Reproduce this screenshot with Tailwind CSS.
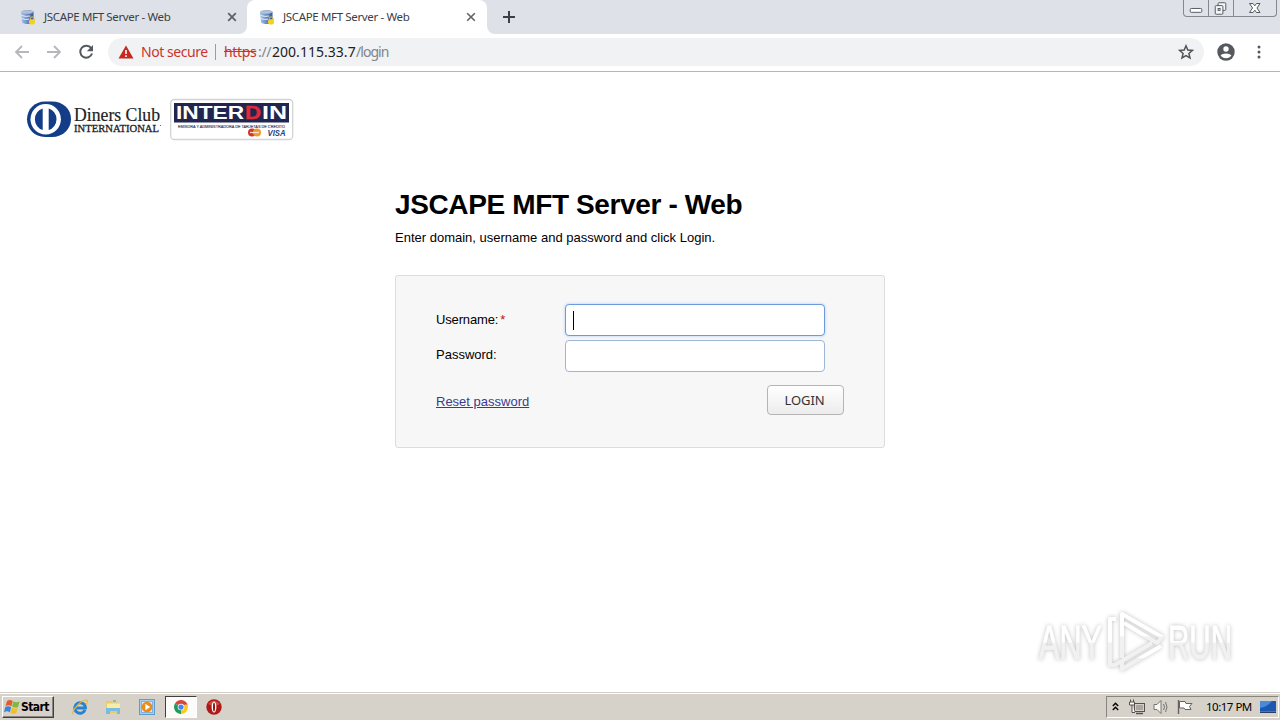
<!DOCTYPE html>
<html lang="en">
<head>
    <meta charset="UTF-8">
    <meta name="viewport" content="width=device-width, initial-scale=1.0">
    <title>JSCAPE MFT Server - Web</title>
    <script src="https://cdn.jsdelivr.net/npm/@tailwindcss/browser@4"></script>
</head>
<body class="w-[1280px] h-[720px] overflow-hidden flex flex-col bg-white text-black font-['Liberation_Sans',sans-serif]">
    <!-- server icon shared by both tabs -->
    <svg class="absolute w-0 h-0">
        <defs>
            <linearGradient id="srv" x1="0" x2="1">
                <stop offset="0" stop-color="#a5c4ee"/>
                <stop offset="1" stop-color="#31569f"/>
            </linearGradient>
            <symbol id="favicon" viewBox="0 0 16 16">
                <path d="M1 3 C1 0.5 13.5 0.5 13.5 3 V13 C13.5 15.8 2.5 15.8 2 13 Z" fill="url(#srv)"/>
                <ellipse cx="7.2" cy="3" rx="6" ry="1.8" fill="#b4c0ce"/>
                <path d="M1.5 6.5 Q6 8 10 7 M1.8 9.5 Q5 11 9 10.2" fill="none" stroke="#e3edfb"/>
                <path d="M10.2 11 V9.8 A1.9 1.9 0 0 1 14 9.8 V11" fill="none" stroke="#c9b04a" stroke-width="1.1"/>
                <rect x="9" y="10.2" width="6" height="5.3" rx="2" fill="#f2d21f"/>
            </symbol>
        </defs>
    </svg>

    <!-- tab strip -->
    <div class="h-[34px] shrink-0 bg-[#dee1e8] flex justify-between font-['Noto_Sans',sans-serif] text-[11.5px] text-[#3c4043]">
        <div class="flex">
            <div class="w-[247px] h-[34px] pl-5 pr-[10px] flex items-center">
                <svg class="size-4 mr-2"><use href="#favicon"/></svg>
                <span class="whitespace-nowrap tracking-[-0.35px]">JSCAPE MFT Server - Web</span>
                <svg class="size-[10px] ml-auto" viewBox="0 0 10 10"><path d="M1.2 1.2 L8.8 8.8 M8.8 1.2 L1.2 8.8" stroke="#5f6368" stroke-width="1.8"/></svg>
            </div>
            <div class="relative w-[240px] h-[34px] pl-3 pr-[11px] flex items-center bg-white rounded-t-lg">
                <svg class="absolute -left-2 bottom-0 size-2" viewBox="0 0 8 8"><path d="M8 0 V8 H0 A8 8 0 0 0 8 0" fill="#fff"/></svg>
                <svg class="absolute -right-2 bottom-0 size-2" viewBox="0 0 8 8"><path d="M0 0 V8 H8 A8 8 0 0 1 0 0" fill="#fff"/></svg>
                <svg class="size-4 mr-2"><use href="#favicon"/></svg>
                <span class="whitespace-nowrap tracking-[-0.35px]">JSCAPE MFT Server - Web</span>
                <svg class="size-[10px] ml-auto" viewBox="0 0 10 10"><path d="M1.2 1.2 L8.8 8.8 M8.8 1.2 L1.2 8.8" stroke="#5f6368" stroke-width="1.6"/></svg>
            </div>
            <svg class="w-3 h-[34px] ml-4" viewBox="0 0 12 34"><path d="M6 11 V23 M0 17 H12" stroke="#3c4043" stroke-width="2"/></svg>
        </div>
        <!-- window controls -->
        <div class="w-[94px] h-[17px] mr-[3px] flex border border-t-0 border-[#85888f] rounded-b-[4px] bg-[#dfe2e8]">
            <svg class="w-[25px] h-4 border-r border-[#85888f]" viewBox="0 0 25 16"><rect x="6.5" y="8.5" width="12" height="4" rx="1" fill="#fff" stroke="#54585f"/></svg>
            <svg class="w-[25px] h-4 border-r border-[#85888f]" viewBox="0 0 25 16"><g fill="#f4f5f7" stroke="#54585f"><rect x="9.5" y="2.5" width="8" height="8" rx="1"/><rect x="6.5" y="5.5" width="8" height="9" rx="1"/><rect x="9.5" y="8.5" width="2" height="2"/></g></svg>
            <svg class="w-[42px] h-4" viewBox="0 0 42 16"><path d="M15.5 3.5 H19 L20.8 5.8 L22.5 3.5 H26 L23 8 L26 12.5 H22.5 L20.8 10.2 L19 12.5 H15.5 L18.6 8 Z" fill="#fff" stroke="#54585f"/></svg>
        </div>
    </div>

    <!-- toolbar -->
    <div class="h-[38px] shrink-0 pl-[14px] pr-[14px] pb-[2px] flex items-center border-b border-[#b4b5b5] bg-white">
        <svg class="size-4 mr-4" viewBox="0 0 16 16"><path d="M15 8 H2 M8 2 L2 8 L8 14" fill="none" stroke="#b5b7ba" stroke-width="1.8"/></svg>
        <svg class="size-4 mr-4" viewBox="0 0 16 16"><path d="M1 8 H14 M8 2 L14 8 L8 14" fill="none" stroke="#b5b7ba" stroke-width="1.8"/></svg>
        <svg class="size-4 mr-[14px]" viewBox="0 0 16 16"><path d="M13.2 4.2 A6 6 0 1 0 14 9.5" fill="none" stroke="#55585c" stroke-width="2"/><path d="M15 1 V7.2 H8.8 Z" fill="#55585c"/></svg>
        <div class="w-[1096px] h-7 pl-[10px] pr-[10px] flex items-center rounded-full bg-[#f0f2f4] font-['Noto_Sans',sans-serif] text-[14px] whitespace-nowrap">
            <svg class="w-4 h-[14px] mr-[7px]" viewBox="0 0 16 14"><path d="M8 0.5 L15.5 13.5 H0.5 Z" fill="#c5281f"/><path d="M8 5 V9 M8 10.3 V12" stroke="#fff" stroke-width="1.6"/></svg>
            <span class="w-[74px] text-[#c9352c] tracking-[-0.45px]">Not secure</span>
            <span class="w-px h-4 mr-2 bg-[#9a9da1]"></span>
            <span class="w-[34px] text-[#c9352c] line-through tracking-[-0.35px]">https</span>
            <span class="w-[14px] text-[#80868b] tracking-[-0.3px]">://</span>
            <span class="w-[84px] text-[#202124] tracking-[0.03px]">200.115.33.7</span>
            <span class="text-[#80868b] tracking-[-0.95px]">/login</span>
            <svg class="size-4 ml-auto" viewBox="0 0 16 16"><path d="M8 1.8 L9.8 6 L14.4 6.4 L10.9 9.4 L12 13.9 L8 11.5 L4 13.9 L5.1 9.4 L1.6 6.4 L6.2 6 Z" fill="none" stroke="#505459" stroke-width="1.5"/></svg>
        </div>
        <svg class="size-[18px] ml-[13px] mr-[22px] shrink-0" viewBox="0 0 18 18"><circle cx="9" cy="9" r="8.7" fill="#55585d"/><circle cx="9" cy="6" r="2.7" fill="#fff"/><path d="M3.6 12.6 C5 9.8 13 9.8 14.4 12.6 C12.5 16 5.5 16 3.6 12.6" fill="#fff"/></svg>
        <svg class="w-1 h-4 shrink-0" viewBox="0 0 4 16"><g fill="#55585d"><circle cx="2" cy="3" r="1.5"/><circle cx="2" cy="8" r="1.5"/><circle cx="2" cy="13" r="1.5"/></g></svg>
    </div>

    <!-- page -->
    <main class="relative h-[620px] shrink-0 bg-white">
        <div class="h-[116px] pt-[26px] pl-[26px] flex items-start">
            <svg class="w-[136px] h-[42px] mr-2 overflow-visible" viewBox="0 0 136 42">
                <path d="M19 3.5 H26 C37 3.5 45 11 45 21 C45 31 37 39 26 39 H19 C8.5 39 1 31 1 21.3 C1 11.5 8.5 3.5 19 3.5 Z" fill="#133d87"/>
                <circle cx="19.7" cy="21.2" r="15.2" fill="#fff"/>
                <path d="M16.7 10.5 A11.3 11.3 0 0 0 16.7 32 Z M22.7 10.5 A11.3 11.3 0 0 1 22.7 32 Z" fill="#133d87"/>
                <text x="48" y="22.5" textLength="86" lengthAdjust="spacingAndGlyphs" font-family="Liberation Serif, serif" font-size="18.5" fill="#222" stroke="#222" stroke-width=".2">Diners Club</text>
                <text x="48" y="33.5" textLength="85" lengthAdjust="spacingAndGlyphs" font-family="Liberation Serif, serif" font-size="10.5" fill="#222" stroke="#222" stroke-width=".3">INTERNATIONAL</text>
                <circle cx="134.5" cy="27.5" r=".6" fill="#555"/>
            </svg>
            <svg class="w-[124px] h-[42px] overflow-visible" viewBox="0 0 124 42">
                <rect x="0.7" y="1.5" width="122" height="40" rx="3.5" fill="#fff" stroke="#d3d3d6" stroke-width="1.3"/>
                <rect x="4" y="5" width="115" height="19.5" fill="#20264f"/>
                <g font-family="Liberation Sans, sans-serif" font-weight="bold" font-size="18" fill="#fff">
                    <text x="6" y="21" textLength="68" lengthAdjust="spacingAndGlyphs">INTER</text>
                    <text x="75" y="21" textLength="16" lengthAdjust="spacingAndGlyphs" fill="#e02a38" stroke="#e02a38" stroke-width=".4">D</text>
                    <text x="92" y="21" textLength="25" lengthAdjust="spacingAndGlyphs">IN</text>
                </g>
                <text x="8" y="29.5" textLength="107" lengthAdjust="spacingAndGlyphs" font-family="Liberation Sans, sans-serif" font-size="4.2" fill="#2e3350" stroke="#2e3350" stroke-width=".12">EMISORA Y ADMINISTRADORA DE TARJETAS DE CREDITO</text>
                <circle cx="82" cy="34.5" r="4" fill="#d73527"/>
                <circle cx="87" cy="34.5" r="4" fill="#f09b32"/>
                <path d="M80 34.5 H89" stroke="#fbe3d0" stroke-width="1.2"/>
                <text x="97.5" y="37.5" textLength="18" lengthAdjust="spacingAndGlyphs" font-family="Liberation Sans, sans-serif" font-weight="bold" font-style="italic" font-size="8.5" fill="#1c4382">VISA</text>
            </svg>
        </div>

        <div class="w-[490px] ml-[395px]">
            <h1 class="h-[34px] text-[28px] leading-[34px] font-bold whitespace-nowrap tracking-[-0.37px]">JSCAPE MFT Server - Web</h1>
            <p class="h-5 mt-[6px] text-[13px] leading-5 whitespace-nowrap">Enter domain, username and password and click Login.</p>
            <form class="h-[173px] mt-[27px] pt-7 px-10 border border-[#dcdcdc] rounded-[3px] bg-[#f7f7f7] text-[13px]">
                <div class="flex items-center mb-1">
                    <label class="w-[129px] tracking-[-0.15px]">Username:<span class="ml-[2px] text-[#c80f16]">*</span></label>
                    <div class="w-[260px] h-8 pl-[7px] flex items-center border border-[#6c9ade] rounded-[4px] bg-white shadow-[0_0_3px_#a9c8f5]">
                        <span class="w-px h-[19px] bg-black"></span>
                    </div>
                </div>
                <div class="flex items-center">
                    <label class="w-[129px] pb-[2px]">Password:</label>
                    <div class="w-[260px] h-8 border border-[#9fb5d7] rounded-[4px] bg-white"></div>
                </div>
                <div class="flex items-center justify-between mt-[13px]">
                    <a class="mt-[4px] text-[#3b3b8e] underline">Reset password</a>
                    <button type="button" class="w-[77px] h-[30px] pt-[2px] pr-[2px] border border-[#b5b5b5] rounded-[4px] bg-linear-to-b from-white to-[#ececec] font-['Noto_Sans',sans-serif] text-[13px] text-[#333] tracking-[-0.1px]">LOGIN</button>
                </div>
            </form>
        </div>

        <!-- watermark -->
        <svg class="absolute left-[1030px] top-[532px] w-[210px] h-[76px] overflow-visible drop-shadow-[0_0_2px_rgba(0,0,0,0.25)]" viewBox="0 0 210 76">
            <defs>
                <linearGradient id="wm" x1="0" x2="0" y1="0" y2="1">
                    <stop offset="0.5" stop-color="#fff"/>
                    <stop offset="0.52" stop-color="#f1f1f1"/>
                </linearGradient>
            </defs>
            <g font-family="Liberation Sans Narrow, Liberation Sans, sans-serif" font-size="49" fill="url(#wm)" stroke="url(#wm)" stroke-width="1">
                <text x="9" y="55" textLength="63" lengthAdjust="spacingAndGlyphs">ANY</text>
                <text x="138" y="55" textLength="64" lengthAdjust="spacingAndGlyphs">RUN</text>
            </g>
            <g fill="none" stroke="url(#wm)" stroke-width="4" stroke-linejoin="round">
                <path d="M92 54 V10 L132 33 L127 39 L94 19"/>
                <path d="M86 15 H80 V61 H85 L122 39"/>
                <path d="M92 58 V65 L131 42"/>
            </g>
        </svg>
    </main>

    <!-- taskbar -->
    <footer class="h-7 shrink-0 flex items-center justify-between border-t border-[#d4d0c8] bg-[#d6d1c9] shadow-[inset_0_1px_0_#fff]">
        <div class="flex items-center pt-[1px] pl-[2px]">
            <div class="w-[52px] h-[22px] pl-px flex items-center border border-t-white border-l-white border-r-[#404040] border-b-[#404040] shadow-[inset_-1px_-1px_0_#88857f]">
                <svg class="size-4 mr-px" viewBox="0 0 16 16">
                    <path d="M3 2 Q6 0 8.7 2 L7.4 7.3 Q5 5.6 1.6 7 Z" fill="#e65a2b"/>
                    <path d="M9.4 2.3 Q12 4 15.6 2.4 L14 8 Q11 9.4 8.1 7.6 Z" fill="#7db93d"/>
                    <path d="M1.3 8 Q4.5 6.6 7.1 8.2 L5.8 13.4 Q3.4 11.4 0 13.2 Z" fill="#3a85d9"/>
                    <path d="M7.8 8.6 Q10.5 10.2 13.7 8.9 L12.2 14.2 Q9 15.8 6.5 13.8 Z" fill="#f4bd29"/>
                </svg>
                <span class="font-['DejaVu_Sans_Condensed','DejaVu_Sans',sans-serif] font-bold text-[12px] tracking-[-0.6px] leading-4">Start</span>
            </div>
            <svg class="size-4 ml-[18px]" viewBox="0 0 16 16">
                <path d="M13 11 A5.3 5.3 0 1 1 13.4 8.9 H4.5" fill="none" stroke="#2583d2" stroke-width="3"/>
                <path d="M1.3 15 C-1.5 12.5 9 1 14 1 C16 1.2 15.5 3.5 14 5.5" fill="none" stroke="#e6b93a" stroke-width="1.2"/>
            </svg>
            <svg class="size-4 ml-[17px]" viewBox="0 0 16 16">
                <path d="M1 2 H6 L7 3.5 H14 V14 H1 Z" fill="#e9cb68"/>
                <path d="M2 4.5 H15 V9 H2 Z" fill="#f9ecab"/>
                <path d="M1 9 H15 V15 H12 V12 H5 V15 H1 Z" fill="#77bde3"/>
                <path d="M8 2 H11" stroke="#58a84b"/>
            </svg>
            <svg class="size-4 ml-[18px]" viewBox="0 0 16 16">
                <rect x=".5" y=".5" width="15" height="15" fill="#a9cfef" stroke="#5f9bcb"/>
                <rect x="2.5" y="2.5" width="11" height="11" fill="#d7eafa" stroke="#7fb2dc"/>
                <circle cx="8" cy="8" r="5.3" fill="#ee8a18"/>
                <path d="M6.3 4.8 L11.3 8 L6.3 11.2 Z" fill="#fff"/>
            </svg>
            <div class="w-8 h-[22px] ml-[10px] flex items-center justify-center border border-t-[#404040] border-l-[#404040] border-r-white border-b-white bg-[#fcfbf9]">
                <svg class="size-[14px]" viewBox="0 0 16 16">
                    <path d="M8 8 L1.1 4 A8 8 0 0 1 14.9 4 Z" fill="#dc4437"/>
                    <path d="M8 8 L14.9 4 A8 8 0 0 1 8 16 Z" fill="#f8c92a"/>
                    <path d="M8 8 L8 16 A8 8 0 0 1 1.1 4 Z" fill="#1f9d58"/>
                    <path d="M8 4 H14.9 L15.4 5.2 H8 Z" fill="#dc4437"/>
                    <circle cx="8" cy="8" r="3.8" fill="#fff"/>
                    <circle cx="8" cy="8" r="3" fill="#4285f4"/>
                </svg>
            </div>
            <svg class="size-4 ml-[9px]" viewBox="0 0 16 16">
                <circle cx="8" cy="8" r="7.7" fill="#ad1a17"/>
                <path d="M2 5 Q8 -2 14 5 Q8 8 2 5" fill="#cf4a43"/>
                <ellipse cx="8" cy="8" rx="2.4" ry="5.5" fill="#fff"/>
                <ellipse cx="8" cy="8" rx="1" ry="4.6" fill="#8a1412"/>
            </svg>
        </div>
        <div class="w-[173px] h-[22px] mt-px mr-px pl-[5px] flex items-center border border-t-[#88857f] border-l-[#88857f] border-r-white border-b-white">
            <svg class="w-[7px] h-[10px]" viewBox="0 0 7 10"><path d="M.8 4 L3.5 1.3 L6.2 4 M.8 8 L3.5 5.3 L6.2 8" fill="none" stroke="#000" stroke-width="1.4"/></svg>
            <svg class="size-4 ml-[10px]" viewBox="0 0 16 16">
                <rect x="5.5" y="4.5" width="10" height="8" fill="#d6d1c9" stroke="#55524d"/>
                <rect x="7" y="6" width="7" height="5" fill="#aaa7a1"/>
                <path d="M7 14.5 H14" stroke="#55524d" stroke-width="1.5"/>
                <path d="M1.5 .5 V3 M4.5 .5 V3 M.5 3 H5.5 V6 H.5 Z M3 6 V13.5 H6" fill="#fff" stroke="#55524d"/>
            </svg>
            <svg class="w-[17px] h-4 ml-2" viewBox="0 0 17 16">
                <path d="M1 5.5 H4 L8 1.5 V14.5 L4 10.5 H1 Z" fill="#f7f7f5" stroke="#77746e"/>
                <path d="M10.5 5 Q12.5 8 10.5 11 M12.5 3 Q15.5 8 12.5 13" fill="none" stroke="#77746e"/>
            </svg>
            <svg class="w-4 h-4 ml-[7px]" viewBox="0 0 16 16">
                <path d="M1.5 1 V15" stroke="#66635e" stroke-width="1.4"/>
                <path d="M2.5 2.5 H8 L9 4.5 H15 L12.5 7.5 L14 10.5 H8 L7 9 H2.5 Z" fill="#fff" stroke="#66635e"/>
            </svg>
            <span class="w-[50px] ml-[13px] whitespace-nowrap font-['Noto_Sans',sans-serif] text-[11.5px] tracking-[-0.5px]">10:17 PM</span>
            <svg class="w-4 h-3 ml-1 shrink-0" viewBox="0 0 16 12">
                <rect width="16" height="10.5" fill="#1c58b0"/>
                <path d="M0 0 H12 Q7 6 0 7 Z" fill="#478bdb"/>
                <path d="M0 11.3 H16" stroke="#23375b" stroke-width="1.3"/>
            </svg>
        </div>
    </footer>
</body>
</html>
